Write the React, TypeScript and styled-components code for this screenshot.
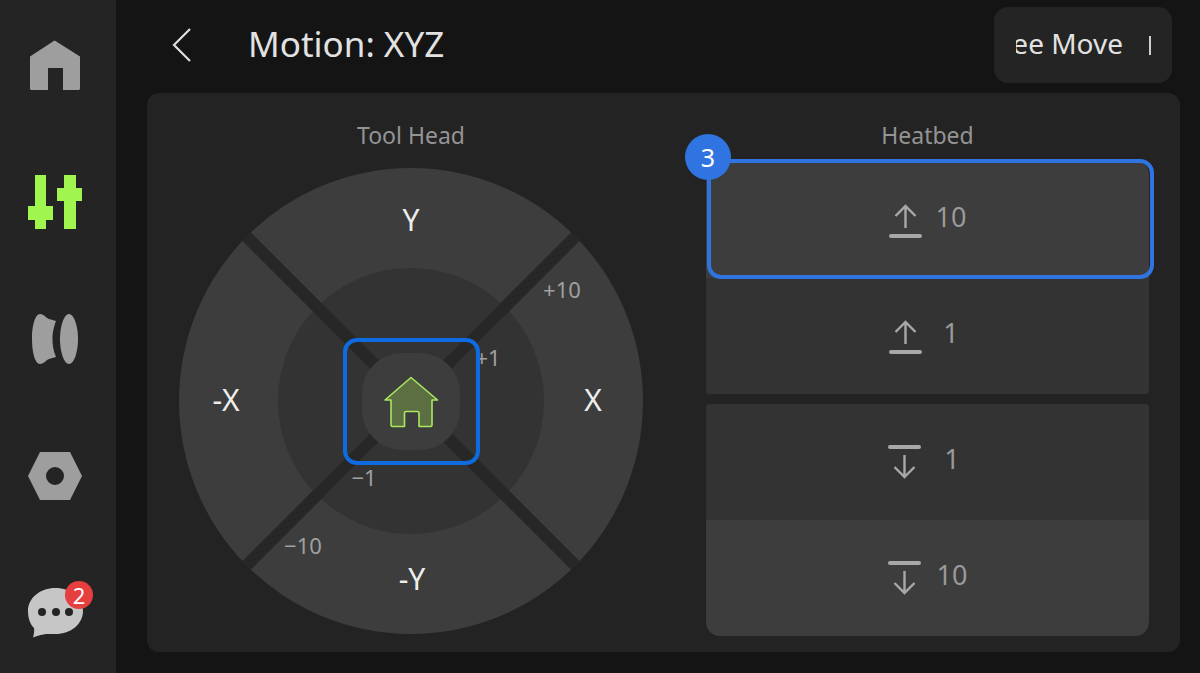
import React from "react";
import styled, { createGlobalStyle } from "styled-components";

const GlobalStyle = createGlobalStyle`
  html, body {
    margin: 0;
    padding: 0;
    background: #141414;
  }
  * {
    box-sizing: border-box;
  }
`;

const FONT = `"Noto Sans", "Open Sans", sans-serif`;

const Screen = styled.div`
  width: 1200px;
  height: 673px;
  display: flex;
  overflow: hidden;
  background: #141414;
  font-family: ${FONT};
`;

const Sidebar = styled.nav`
  width: 116px;
  flex: none;
  display: flex;
  flex-direction: column;
  align-items: center;
  gap: 87px;
  padding-top: 40px;
  padding-right: 6px;
  background: #242424;
`;

const NavIcon = styled.div`
  position: relative;
  width: 56px;
  height: 50px;
  display: flex;
  align-items: center;
  justify-content: center;
`;

const Badge = styled.span`
  position: absolute;
  top: -7px;
  right: -10px;
  width: 28px;
  height: 28px;
  display: flex;
  align-items: center;
  justify-content: center;
  border-radius: 50%;
  background: #e5403f;
  color: #fff;
  font-size: 22px;
  line-height: 1;
`;

const Main = styled.main`
  flex: 1;
  display: flex;
  flex-direction: column;
  min-width: 0;
`;

const Header = styled.header`
  height: 93px;
  flex: none;
  display: flex;
  align-items: center;
  padding: 0 28px 3px 56px;
`;

const Title = styled.h1`
  margin: 0 0 3px 56px;
  flex: 1;
  color: #e2e2e2;
  font-size: 35px;
  font-weight: 400;
  line-height: 1;
`;

const MoveButton = styled.div`
  width: 178px;
  height: 76px;
  padding: 0 21px 0 22px;
  display: flex;
  align-items: center;
  border-radius: 14px;
  background: #242424;
`;

const MoveClip = styled.div`
  width: 100%;
  display: flex;
  align-items: center;
  justify-content: flex-end;
  gap: 26px;
  overflow: hidden;
  white-space: nowrap;
  color: #e2e2e2;
  font-size: 28px;
  line-height: 1;
  padding-bottom: 4px;
`;

const MoveCaret = styled.span`
  flex: none;
  width: 2px;
  height: 19px;
  margin-top: 4px;
  background: #cfcfcf;
`;

const Panel = styled.section`
  flex: 1;
  display: grid;
  grid-template-columns: 464px 443px;
  column-gap: 63px;
  margin: 0 20px 22px 31px;
  padding: 29px 31px 16px 32px;
  border-radius: 12px;
  background: #232323;
`;

const Column = styled.div`
  display: flex;
  flex-direction: column;
  align-items: center;
  min-width: 0;
`;

const ColumnTitle = styled.h2<{ $gap: number }>`
  margin: 0 0 ${(p) => p.$gap}px;
  height: 26px;
  color: #949494;
  font-size: 23px;
  font-weight: 400;
  line-height: 26px;
`;

const Dial = styled.div`
  position: relative;
  width: 464px;
  height: 466px;
`;

const DialArt = styled.svg`
  display: block;
`;

const HomeFocus = styled.div`
  position: absolute;
  left: 164px;
  top: 170px;
  width: 137px;
  height: 127px;
  border: 4px solid #0f6be0;
  border-radius: 14px;
`;

const AxisLabel = styled.span<{ $x: number; $y: number }>`
  position: absolute;
  left: ${(p) => p.$x}px;
  top: ${(p) => p.$y}px;
  transform: translate(-50%, -50%);
  color: #ededed;
  font-size: 30px;
  line-height: 1;
`;

const StepLabel = styled.span<{ $x: number; $y: number }>`
  position: absolute;
  left: ${(p) => p.$x}px;
  top: ${(p) => p.$y}px;
  transform: translate(-50%, -50%);
  color: #a0a0a0;
  font-size: 22px;
  line-height: 1;
`;

const BedList = styled.div`
  position: relative;
  width: 100%;
  display: flex;
  flex-direction: column;
  gap: 10px;
`;

const BedGroup = styled.div<{ $bottom?: boolean }>`
  display: flex;
  flex-direction: column;
  overflow: hidden;
  border-radius: ${(p) => (p.$bottom ? "3px 3px 14px 14px" : "12px 12px 3px 3px")};
`;

const BedButton = styled.div<{ $active?: boolean }>`
  height: 116px;
  display: flex;
  align-items: center;
  justify-content: center;
  gap: 14px;
  background: ${(p) => (p.$active ? "#3d3d3d" : "#333333")};
`;

const BedValue = styled.span`
  width: 31px;
  margin-bottom: 7px;
  text-align: center;
  color: #9a9a9a;
  font-size: 27px;
  line-height: 1;
`;

const LiftArt = styled.svg<{ $down?: boolean }>`
  display: block;
  margin: ${(p) => (p.$down ? "0 2px 1px 0" : "2px 0 0")};
`;

const BedFocus = styled.div`
  position: absolute;
  top: -3px;
  left: 1px;
  right: -5px;
  height: 120px;
  border: 4px solid #2f74e0;
  border-radius: 14px;
`;

const StepBadge = styled.span`
  position: absolute;
  top: -28px;
  left: -21px;
  width: 46px;
  height: 46px;
  display: flex;
  align-items: center;
  justify-content: center;
  border-radius: 50%;
  background: #2f74e0;
  color: #fff;
  font-size: 25px;
  line-height: 1;
`;

const GRAY = "#9e9e9e";

const HomeIcon = () => (
  <svg width="50" height="50" viewBox="0 0 50 50">
    <path
      d="M24.500 0.500 Q25 0.500 25.500 1 L50 16.500 V48.500 Q50 50 48.500 50 H33 V28 H18 V50 H1.500 Q0 50 0 48.500 V16.500 Z"
      fill={GRAY}
    />
  </svg>
);

const TuneIcon = () => (
  <svg width="56" height="56" viewBox="0 0 56 56" fill="#a0f54e">
    <path d="M8 1 H19 V32 H26 V46 H19 V55 H8 V46 H1 V32 H8 Z" />
    <path d="M37 1 H49 V14 H55 V27 H49 V55 H37 V27 H30 V14 H37 Z" />
  </svg>
);

const SpoolIcon = () => (
  <svg width="50" height="50" viewBox="0 0 50 50" fill={GRAY}>
    <path d="M10 0 C14 0 16 4 19 5 L26 7 C23 15 22.500 20 22.500 25 C22.500 30 23 36 26 43 L19 45 C16 46 14 50 10 50 C5 50 2 38 2 25 C2 12 5 0 10 0 Z" />
    <path d="M39 0 C44 0 48 12 48 25 C48 38 44 50 39 50 C34 50 30 38 30 25 C30 12 34 0 39 0 Z" />
  </svg>
);

const NutIcon = () => (
  <svg width="56" height="50" viewBox="0 0 56 50">
    <path
      fillRule="evenodd"
      d="M13 1 H43 L55 25 L43 49 H13 L1 25 Z M28 16 A9 9 0 1 0 28.001 34 A9 9 0 1 0 28 16 Z"
      fill={GRAY}
    />
  </svg>
);

const ChatIcon = () => (
  <svg width="56" height="50" viewBox="0 0 56 50">
    <path
      d="M28.500 0 C44 0 56 10 56 23 C56 36 44 46 28.500 46 C22 46 17 45 6 49.500 C7 46 7.500 43 7 40 C3 36 1 30 1 23 C1 10 13 0 28.500 0 Z"
      fill="#c6c6c6"
    />
    <circle cx="15" cy="24" r="4" fill="#242424" />
    <circle cx="29" cy="24" r="4" fill="#242424" />
    <circle cx="42" cy="24" r="4" fill="#242424" />
  </svg>
);

const BackIcon = () => (
  <svg width="20" height="34" viewBox="0 0 20 34" fill="none">
    <path d="M18 1 L2 17 L18 33" stroke="#dedede" strokeWidth="2.200" />
  </svg>
);

const LiftIcon = ({ down }: { down?: boolean }) => (
  <LiftArt $down={down} width="33" height="34" viewBox="0 0 33 34" fill="none" stroke="#a8a8a8">
    {down ? (
      <>
        <path d="M2 2 H31" strokeWidth="4" strokeLinecap="round" />
        <path d="M16.500 10 V32 M6.500 22 L16.500 32 L26.500 22" strokeWidth="2.400" />
      </>
    ) : (
      <>
        <path d="M2 32 H31" strokeWidth="4" strokeLinecap="round" />
        <path d="M16.500 24 V2 M6.500 12 L16.500 2 L26.500 12" strokeWidth="2.400" />
      </>
    )}
  </LiftArt>
);

// the dial: outer ring, inner ring, the four cuts and the home key
const DialDrawing = () => (
  <DialArt width="464" height="466" viewBox="0 0 464 466">
    <defs>
      <clipPath id="dial-edge">
        <ellipse cx="232" cy="233" rx="232" ry="233" />
      </clipPath>
    </defs>
    <ellipse cx="232" cy="233" rx="232" ry="233" fill="#3d3d3d" />
    <circle cx="232" cy="233" r="133" fill="#333333" />
    <path
      d="M58 59 L406 407 M406 59 L58 407"
      stroke="#272727"
      strokeWidth="12"
      clipPath="url(#dial-edge)"
    />
    <rect x="183" y="185" width="98" height="97" rx="40" fill="#3d3d3d" />
    <path
      d="M232 209.500 L258.500 232 L253 232 V257 Q253 258.500 251.500 258.500 H240 V245 Q240 243.500 238.500 243.500 H227 Q225.500 243.500 225.500 245 V258.500 H213.500 Q212 258.500 212 257 V232 L206 232 Z"
      fill="#5b6f42"
      stroke="#a9e860"
      strokeWidth="1.600"
      strokeLinejoin="round"
    />
  </DialArt>
);

export default function App() {
  return (
    <>
      <GlobalStyle />
      <Screen>
        <Sidebar>
          <NavIcon>
            <HomeIcon />
          </NavIcon>
          <NavIcon>
            <TuneIcon />
          </NavIcon>
          <NavIcon>
            <SpoolIcon />
          </NavIcon>
          <NavIcon>
            <NutIcon />
          </NavIcon>
          <NavIcon>
            <ChatIcon />
            <Badge>2</Badge>
          </NavIcon>
        </Sidebar>
        <Main>
          <Header>
            <BackIcon />
            <Title>Motion: XYZ</Title>
            <MoveButton>
              <MoveClip>
                <span>Free Move</span>
                <MoveCaret />
              </MoveClip>
            </MoveButton>
          </Header>
          <Panel>
            <Column>
              <ColumnTitle $gap={20}>Tool Head</ColumnTitle>
              <Dial>
                <DialDrawing />
                <AxisLabel $x={232} $y={52}>Y</AxisLabel>
                <AxisLabel $x={47} $y={232}>-X</AxisLabel>
                <AxisLabel $x={414} $y={232}>X</AxisLabel>
                <AxisLabel $x={233} $y={411}>-Y</AxisLabel>
                <StepLabel $x={383} $y={121}>+10</StepLabel>
                <StepLabel $x={309} $y={189}>+1</StepLabel>
                <StepLabel $x={185} $y={309}>−1</StepLabel>
                <StepLabel $x={124} $y={377}>−10</StepLabel>
                <HomeFocus />
              </Dial>
            </Column>
            <Column>
              <ColumnTitle $gap={14}>Heatbed</ColumnTitle>
              <BedList>
                <BedGroup>
                  <BedButton $active>
                    <LiftIcon />
                    <BedValue>10</BedValue>
                  </BedButton>
                  <BedButton>
                    <LiftIcon />
                    <BedValue>1</BedValue>
                  </BedButton>
                </BedGroup>
                <BedGroup $bottom>
                  <BedButton>
                    <LiftIcon down />
                    <BedValue>1</BedValue>
                  </BedButton>
                  <BedButton $active>
                    <LiftIcon down />
                    <BedValue>10</BedValue>
                  </BedButton>
                </BedGroup>
                <BedFocus />
                <StepBadge>3</StepBadge>
              </BedList>
            </Column>
          </Panel>
        </Main>
      </Screen>
    </>
  );
}
